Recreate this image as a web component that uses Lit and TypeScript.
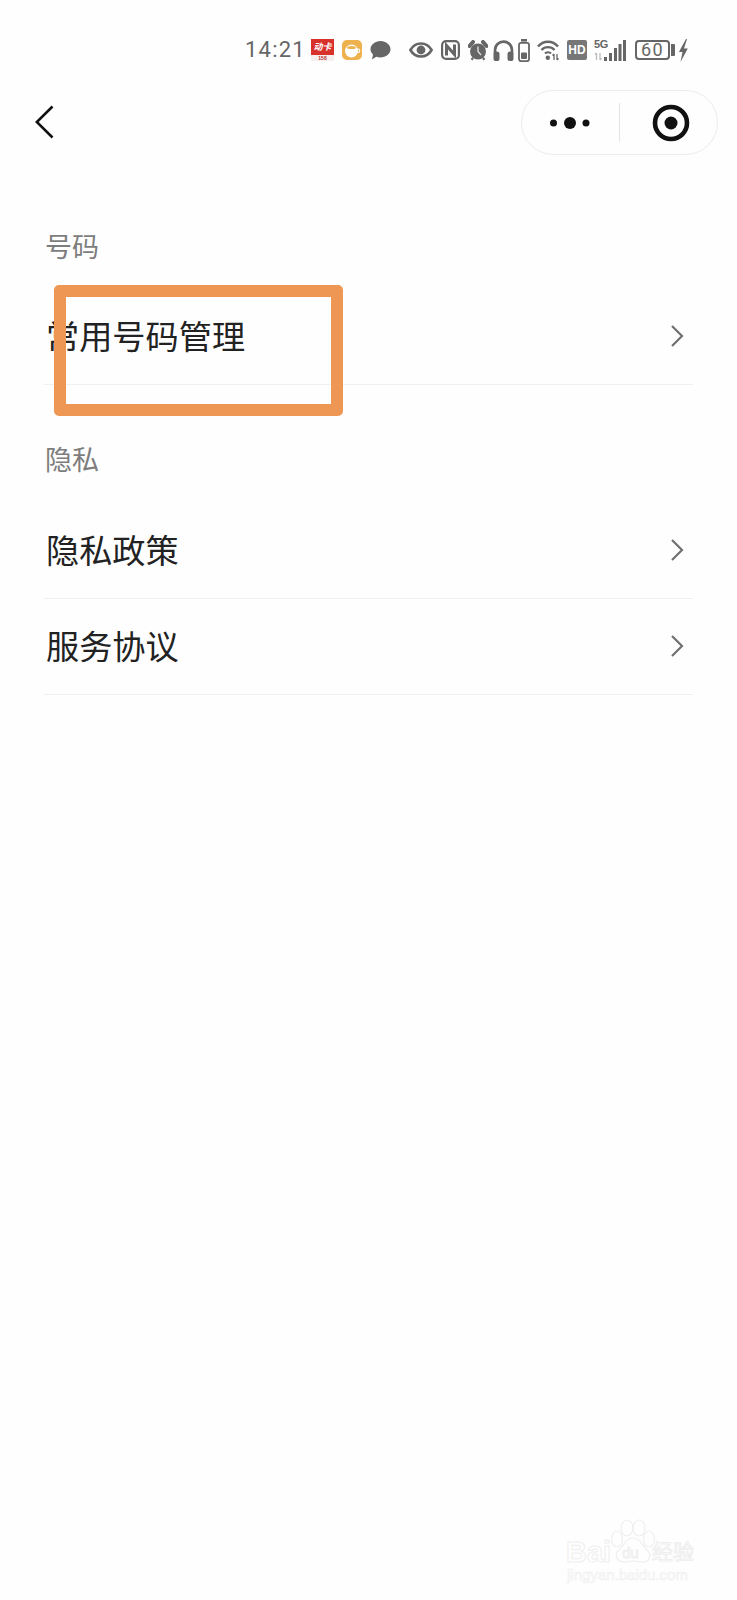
import { LitElement, html, css } from 'lit';
import { customElement } from 'lit/decorators.js';

const chevron = html`<svg class="chev" width="14" height="24" viewBox="0 0 14 24"><path d="M2 2 L12 12 L2 22" fill="none" stroke="#707070" stroke-width="2.2"/></svg>`;

@customElement('app-root')
export class AppRoot extends LitElement {
  static styles = css`
    :host {
      display: block;
      position: relative;
      height: 1600px;
      overflow: hidden;
      background: #fefefe;
      font-family: "Noto Sans CJK SC", "Noto Sans", sans-serif;
      color: #222;
    }
    .status {
      height: 76px;
      padding: 24px 49px 0 245px;
      box-sizing: border-box;
      display: flex;
      align-items: center;
      justify-content: space-between;
      color: #666;
    }
    .left, .right { display: flex; align-items: center; }
    .left { gap: 8px; }
    .right { gap: 7px; }
    .time {
      width: 58px;
      font: 22px/1 Roboto, sans-serif;
      letter-spacing: 1.2px;
    }
    .m1 { margin-left: 1px; }
    .m2 { margin-left: 2px; }
    .mn2 { margin-left: -2px; }
    .mn3 { margin-left: -3px; }
    .app-red {
      width: 23px;
      height: 22px;
      display: flex;
      flex-direction: column;
      background: #d8302a;
      overflow: hidden;
    }
    .app-red b {
      flex: 1;
      color: #fff;
      font-size: 9px;
      line-height: 15px;
      text-align: center;
      font-style: italic;
    }
    .app-red i {
      height: 6px;
      background: #f6efee;
      color: #b33;
      font: 700 5px/6px "Liberation Sans", sans-serif;
      text-align: center;
    }
    .hd {
      width: 20px;
      height: 20px;
      border-radius: 2px;
      background: #777;
      color: #fff;
      font: 700 12px/20px "Liberation Sans", sans-serif;
      text-align: center;
    }
    .net {
      width: 32px;
      height: 22px;
      position: relative;
    }
    .net span {
      position: absolute;
      left: 0;
      top: -1px;
      font: 700 11px/12px "Liberation Sans", sans-serif;
      letter-spacing: -0.3px;
      color: #666;
    }
    .net svg { position: absolute; left: 0; top: 0; }
    .battery {
      width: 31px;
      height: 16px;
      border: 2px solid #666;
      border-radius: 4px;
      box-sizing: content-box;
      color: #666;
      font: 400 18px/16px Roboto, sans-serif;
      letter-spacing: 1.5px;
      text-align: center;
    }
    .battery-wrap { display: flex; align-items: center; gap: 1px; }
    .cap { width: 4px; height: 12px; background: #666; border-radius: 0 1px 1px 0; }

    .nav {
      height: 94px;
      padding: 14px 19px 0 35px;
      display: flex;
      align-items: flex-start;
      justify-content: space-between;
      box-sizing: border-box;
    }
    .back { margin-top: 15px; }
    .capsule {
      width: 197px;
      height: 65px;
      box-sizing: border-box;
      border: 1px solid #ececec;
      border-radius: 33px;
      display: flex;
      align-items: center;
    }
    .cap-btn { display: flex; justify-content: center; align-items: center; }
    .cap-btn.more { width: 97px; flex: none; }
    .cap-btn.target { flex: 1; padding-left: 5px; }
    .cap-div { width: 1px; height: 39px; background: #e4e4e4; }

    .title {
      margin: 0 45px;
      font-size: 27px;
      font-weight: 400;
      line-height: 40px;
      color: #7d7d7d;
    }
    .title.first { margin-top: 56px; margin-bottom: 23px; }
    .title.next { margin-top: 54px; margin-bottom: 24px; }
    .row {
      height: 96px;
      margin: 0 44px;
      box-sizing: border-box;
      border-bottom: 1px solid #f0f0f0;
      display: flex;
      align-items: center;
      justify-content: space-between;
      font-size: 33.2px;
      padding: 0 9px 0 2px;
    }
    .row span { margin-top: -5px; }
    .chev { margin-top: -1px; }

    .mark {
      position: absolute;
      left: 54px;
      top: 285px;
      width: 289px;
      height: 131px;
      box-sizing: border-box;
      border: 12px solid #ee9653;
      border-radius: 5px;
    }
    .wm {
      position: absolute;
      left: 562px;
      top: 1518px;
      width: 140px;
      height: 64px;
      color: transparent;
      -webkit-text-stroke: 1px #efefef;
    }
    .wm span { position: absolute; white-space: nowrap; }
    .wm .bai { left: 4px; top: 22px; font: 700 29px/24px "Liberation Sans", sans-serif; }
    .wm .du { left: 60px; top: 27px; font: 400 15px/16px "Liberation Sans", sans-serif; }
    .wm .jy { left: 90px; top: 19px; font: 400 21px/26px "Noto Sans CJK SC", sans-serif; }
    .wm .url { left: 5px; top: 48px; font: 400 15px/17px "Liberation Sans", sans-serif; -webkit-text-stroke: 0.6px #efefef; }
    .wm svg { position: absolute; left: 0; top: 0; }
  `;

  render() {
    return html`
      <div class="status">
        <div class="left">
          <span class="time">14:21</span>
          <span class="app-red"><b>动卡</b><i>158</i></span>
          <svg width="20" height="20" viewBox="0 0 20 20">
            <rect width="20" height="20" rx="5" fill="#edb24e"/>
            <ellipse cx="9.5" cy="11" rx="6.5" ry="6.5" fill="#fff"/>
            <ellipse cx="9.5" cy="7.5" rx="4.5" ry="1.6" fill="#edb24e"/>
            <path d="M15 9 h1 a1.5 1.5 0 0 1 0 3.5 H15" fill="none" stroke="#fff" stroke-width="1.2"/>
          </svg>
          <svg width="21" height="21" viewBox="0 0 21 21">
            <path d="M10.5 1 C16 1 20.5 4.7 20.5 9.3 C20.5 13.9 16 17.5 10.5 17.5 C9 17.5 7.5 17.2 6.3 16.8 L2 19.5 L3 14.6 C1.4 13.1 .5 11.3 .5 9.3 C.5 4.7 5 1 10.5 1 Z" fill="#666"/>
          </svg>
        </div>
        <div class="right">
          <svg width="24" height="16" viewBox="0 0 24 16">
            <path d="M1.4 8 C4 3.5 8 1.5 12 1.5 C16 1.5 20 3.5 22.6 8 C20 12.5 16 14.5 12 14.5 C8 14.5 4 12.5 1.4 8 Z" fill="none" stroke="#666" stroke-width="2.6"/>
            <circle cx="12" cy="8" r="4.4" fill="#666"/>
          </svg>
          <svg class="m1" width="19" height="20" viewBox="0 0 19 20">
            <rect x="1.1" y="1.1" width="16.8" height="17.8" rx="4" fill="#fff" stroke="#666" stroke-width="2.2"/>
            <path d="M5.5 15.5 V5.5 L13.5 14.5 V4.5" fill="none" stroke="#666" stroke-width="3"/>
          </svg>
          <svg class="m1" width="20" height="21" viewBox="0 0 20 21">
            <circle cx="10" cy="11.5" r="8" fill="#666"/>
            <path d="M1.5 6 L5 2 M18.5 6 L15 2" stroke="#666" stroke-width="4" stroke-linecap="round"/>
            <path d="M3.5 19.8 L5 18 M16.5 19.8 L15 18" stroke="#666" stroke-width="2.2"/>
            <path d="M10 6.5 V11.5 L13 15" fill="none" stroke="#ddd" stroke-width="1.4"/>
          </svg>
          <svg class="mn2" width="21" height="21" viewBox="0 0 21 21">
            <path d="M2 14 V10.5 C2 5 6 1.6 10.5 1.6 C15 1.6 19 5 19 10.5 V14" fill="none" stroke="#666" stroke-width="2.6"/>
            <rect x="0.5" y="11.5" width="6" height="9.5" rx="2.6" fill="#666"/>
            <rect x="14.5" y="11.5" width="6" height="9.5" rx="2.6" fill="#666"/>
          </svg>
          <svg class="mn3" width="12" height="23" viewBox="0 0 12 23">
            <rect x="3" y="0" width="6" height="2.6" fill="#666"/>
            <rect x="1" y="3.9" width="10" height="18.2" rx="2" fill="none" stroke="#666" stroke-width="1.8"/>
            <rect x="3" y="13.5" width="6" height="6.5" rx="1" fill="#666"/>
          </svg>
          <svg width="23" height="22" viewBox="0 0 23 22">
            <path d="M1 7.5 C6.5 1.2 15.5 1.2 21 7.5" fill="none" stroke="#666" stroke-width="2.4"/>
            <path d="M4.5 11 C8 7.2 14 7.2 17.5 11" fill="none" stroke="#666" stroke-width="2.4"/>
            <path d="M8 14.5 C9.5 12.8 12.5 12.8 14 14.5" fill="none" stroke="#666" stroke-width="2.2"/>
            <circle cx="10.8" cy="18.8" r="2.2" fill="#666"/>
            <path d="M17 21 V15 M15.5 16.5 L17 15 M20 15 V21 M20 21 L21.6 19.4" fill="none" stroke="#666" stroke-width="1.3"/>
          </svg>
          <span class="hd">HD</span>
          <span class="net">
            <span>5G</span>
            <svg width="32" height="22" viewBox="0 0 32 22">
              <path d="M2.5 21 V14 M1 15.5 L2.5 14 M6 14 V21 M6 21 L7.6 19.4" fill="none" stroke="#bbb" stroke-width="1.3"/>
              <rect x="10" y="18" width="3" height="4" fill="#666"/>
              <rect x="15" y="14" width="3" height="8" fill="#666"/>
              <rect x="20" y="9" width="3" height="13" fill="#666"/>
              <rect x="24.5" y="5" width="3" height="17" fill="#666"/>
              <rect x="29" y="1" width="3" height="21" fill="#666"/>
            </svg>
          </span>
          <span class="battery-wrap m2">
            <span class="battery">60</span>
            <span class="cap"></span>
          </span>
          <svg class="mn3" width="9" height="23" viewBox="0 0 9 23">
            <path d="M7 0 L1.5 10 L0 13 H3.5 L1.5 23 L8.8 9.5 H5 L8 0 Z" fill="#666"/>
          </svg>
        </div>
      </div>

      <div class="nav">
        <svg class="back" width="19" height="34" viewBox="0 0 19 34">
          <path d="M17.5 1.5 L1.8 17 L17.5 32.5" fill="none" stroke="#111" stroke-width="2.6"/>
        </svg>
        <div class="capsule">
          <div class="cap-btn more">
            <svg width="44" height="14" viewBox="0 0 44 14">
              <circle cx="4.5" cy="7" r="3.5" fill="#111"/>
              <circle cx="21" cy="7" r="6" fill="#111"/>
              <circle cx="37" cy="7" r="3.5" fill="#111"/>
            </svg>
          </div>
          <div class="cap-div"></div>
          <div class="cap-btn target">
            <svg width="38" height="38" viewBox="0 0 38 38">
              <circle cx="19" cy="19" r="16" fill="none" stroke="#111" stroke-width="4.6"/>
              <circle cx="19" cy="19" r="6.5" fill="#111"/>
            </svg>
          </div>
        </div>
      </div>

      <h2 class="title first">号码</h2>
      <div class="row"><span>常用号码管理</span>${chevron}</div>
      <h2 class="title next">隐私</h2>
      <div class="row"><span>隐私政策</span>${chevron}</div>
      <div class="row"><span>服务协议</span>${chevron}</div>

      <div class="mark"></div>

      <div class="wm">
        <svg width="140" height="64" viewBox="0 0 140 64" fill="none" stroke="#efefef" stroke-width="1.2">
          <ellipse cx="65" cy="10" rx="6" ry="8"/>
          <ellipse cx="77" cy="10" rx="6" ry="8"/>
          <ellipse cx="55" cy="21" rx="5.5" ry="8"/>
          <ellipse cx="87" cy="21" rx="5.5" ry="8"/>
          <path d="M71 20 C63 20 62 28 57 32 C52 36 54 44 62 44 C66 44 68 43 71 43 C74 43 77 44 81 44 C88 44 90 36 85 32 C80 28 79 20 71 20 Z"/>
        </svg>
        <span class="bai">Bai</span>
        <span class="du">du</span>
        <span class="jy">经验</span>
        <span class="url">jingyan.baidu.com</span>
      </div>
    `;
  }
}
